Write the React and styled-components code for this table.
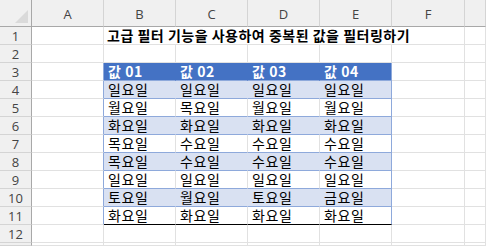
import React from "react"
import styled, { createGlobalStyle } from "styled-components"

const Global = createGlobalStyle`
    html, body {
        margin: 0;
        padding: 0;
        background: #ffffff;
    }
`;

const GRID = "#e1e1e1";
const BAND = "#d9e1f2";
const HEAD = "#4472c4";
const EDGE = "#8ea9db";

const Sheet = styled.div`
    width: 486px;
    height: 246px;
    overflow: hidden;
    display: grid;
    grid-template-columns: 32px repeat(5, 72px) 73px 1fr;
    grid-template-rows: 27px repeat(12, 18px) 1fr;
    font-family: "Noto Sans CJK KR", "Noto Sans", sans-serif;
    background: #ffffff;
`;

const Corner = styled.div`
    background: #f0f0f0;
    border-right: 1px solid #a8a8a8;
    border-bottom: 1px solid #a8a8a8;
    display: flex;
    align-items: flex-end;
    justify-content: flex-end;
    padding: 0 3px 3px 0;
`;

const ColHead = styled.div`
    background: #f0f0f0;
    border-right: 1px solid #d4d4d4;
    border-bottom: 1px solid #a8a8a8;
    color: #444444;
    font-family: "Open Sans", "Noto Sans", sans-serif;
    font-size: 13px;
    display: flex;
    align-items: center;
    justify-content: center;
    padding-top: 1px;
`;

const RowHead = styled.div`
    background: #f0f0f0;
    border-right: 1px solid #a8a8a8;
    border-bottom: 1px solid #d4d4d4;
    color: #444444;
    font-family: "Open Sans", "Noto Sans", sans-serif;
    font-size: 13px;
    display: flex;
    align-items: center;
    justify-content: center;
`;

const Cell = styled.div`
    background: ${p => p.$fill || "#ffffff"};
    border-right: 1px solid ${p => p.$right || GRID};
    border-bottom: 1px solid ${p => p.$bottom || GRID};
    color: ${p => (p.$head ? "#ffffff" : "#000000")};
    font-weight: ${p => (p.$head ? 700 : 400)};
    font-size: 14px;
    line-height: 17px;
    padding-left: 4px;
    white-space: nowrap;
    overflow: visible;
    display: flex;
    align-items: flex-end;
    letter-spacing: 0.6px;
`;

const Title = styled(Cell)`
    grid-column: span 5;
    font-weight: 700;
    letter-spacing: 0.5px;
    padding-left: 3px;
`;

const cols = ["A", "B", "C", "D", "E", "F", ""];

const data = [
    ["일요일", "일요일", "일요일", "일요일"],
    ["월요일", "목요일", "월요일", "월요일"],
    ["화요일", "화요일", "화요일", "화요일"],
    ["목요일", "수요일", "수요일", "수요일"],
    ["목요일", "수요일", "수요일", "수요일"],
    ["일요일", "일요일", "일요일", "일요일"],
    ["토요일", "월요일", "토요일", "금요일"],
    ["화요일", "화요일", "화요일", "화요일"],
];

const Triangle = () => (
    <svg width="13" height="13" viewBox="0 0 13 13">
        <polygon points="13,0 13,13 0,13" fill="#dadada" />
    </svg>
);

const App = () => {
    const rows = [];

    // row 1: title spilling over B..F
    rows.push(
        <React.Fragment key="r1">
            <RowHead>1</RowHead>
            <Cell />
            <Title>고급 필터 기능을 사용하여 중복된 값을 필터링하기</Title>
            <Cell />
        </React.Fragment>
    );

    // row 2: empty
    rows.push(
        <React.Fragment key="r2">
            <RowHead>2</RowHead>
            {cols.map((c, i) => <Cell key={i} />)}
        </React.Fragment>
    );

    // row 3: table header
    rows.push(
        <React.Fragment key="r3">
            <RowHead>3</RowHead>
            <Cell $right={EDGE} />
            {["값 01", "값 02", "값 03", "값 04"].map((t, i) => (
                <Cell key={i} $head $fill={HEAD} $right={i === 3 ? EDGE : HEAD} $bottom={EDGE}>{t}</Cell>
            ))}
            <Cell />
            <Cell />
        </React.Fragment>
    );

    data.forEach((r, ri) => {
        const n = ri + 4;
        const band = ri % 2 === 0;
        const last = ri === data.length - 1;
        rows.push(
            <React.Fragment key={"r" + n}>
                <RowHead>{n}</RowHead>
                <Cell $right={EDGE} />
                {r.map((t, i) => (
                    <Cell
                        key={i}
                        $fill={band ? BAND : "#ffffff"}
                        $right={i === 3 ? EDGE : band ? BAND : GRID}
                        $bottom={last ? "#000000" : EDGE}
                    >
                        {t}
                    </Cell>
                ))}
                <Cell />
                <Cell />
            </React.Fragment>
        );
    });

    // row 12 and the cut-off row below
    rows.push(
        <React.Fragment key="r12">
            <RowHead>12</RowHead>
            {cols.map((c, i) => <Cell key={i} />)}
            <RowHead />
            {cols.map((c, i) => <Cell key={"x" + i} />)}
        </React.Fragment>
    );

    return (
        <>
            <Global />
            <Sheet>
                <Corner><Triangle /></Corner>
                {cols.map((c, i) => <ColHead key={i}>{c}</ColHead>)}
                {rows}
            </Sheet>
        </>
    );
};

export default App;
